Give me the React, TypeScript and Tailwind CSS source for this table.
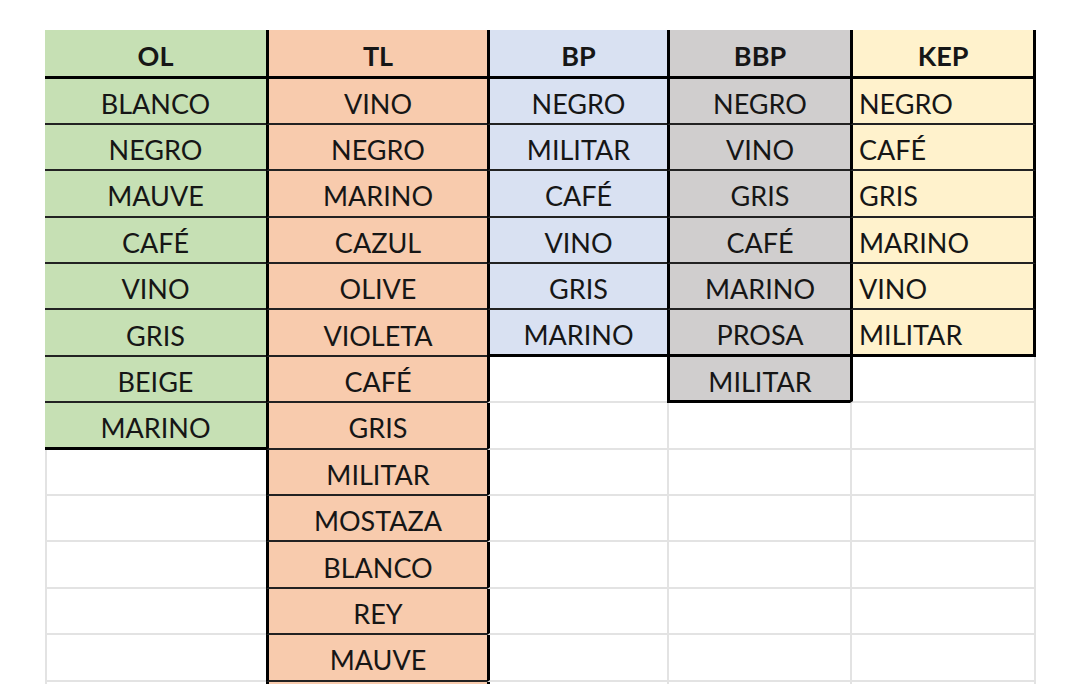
import React from 'react';

const L_THICK = 'border-l-[3px] border-l-black';
const L_GRID = 'border-l-2 border-l-[#e3e3e3]';
const R_THICK = 'border-r-[3px] border-r-black';
const R_GRID = 'border-r-2 border-r-[#e3e3e3]';
const B_THICK = 'border-b-[3px] border-b-black';
const B_THIN = 'border-b-2 border-b-[#222]';
const B_GRID = 'border-b-2 border-b-[#e3e3e3]';

const BODY_ROWS = 14;

type ColumnDef = {
  title: string;
  items: string[];
  width: string;
  bg: string;
  leftThickRows: number;
  rightThickRows: number;
  leftGrid: boolean;
  rightGrid: boolean;
  thickBottomAt: number[];
  fillRows?: number;
  alignLeft?: boolean;
};

const columns: ColumnDef[] = [
  {
    title: 'OL',
    items: ['BLANCO', 'NEGRO', 'MAUVE', 'CAFÉ', 'VINO', 'GRIS', 'BEIGE', 'MARINO'],
    width: 'w-[221px]',
    bg: 'bg-[#c6e0b4]',
    leftThickRows: 0,
    rightThickRows: 0,
    leftGrid: true,
    rightGrid: false,
    thickBottomAt: [8],
  },
  {
    title: 'TL',
    items: [
      'VINO', 'NEGRO', 'MARINO', 'CAZUL', 'OLIVE', 'VIOLETA', 'CAFÉ',
      'GRIS', 'MILITAR', 'MOSTAZA', 'BLANCO', 'REY', 'MAUVE',
    ],
    width: 'w-[221px]',
    bg: 'bg-[#f8cbad]',
    leftThickRows: 99,
    rightThickRows: 0,
    leftGrid: false,
    rightGrid: false,
    thickBottomAt: [],
    fillRows: 14,
  },
  {
    title: 'BP',
    items: ['NEGRO', 'MILITAR', 'CAFÉ', 'VINO', 'GRIS', 'MARINO'],
    width: 'w-[180px]',
    bg: 'bg-[#d9e1f2]',
    leftThickRows: 99,
    rightThickRows: 0,
    leftGrid: false,
    rightGrid: false,
    thickBottomAt: [6],
  },
  {
    title: 'BBP',
    items: ['NEGRO', 'VINO', 'GRIS', 'CAFÉ', 'MARINO', 'PROSA', 'MILITAR'],
    width: 'w-[183px]',
    bg: 'bg-[#d0cece]',
    leftThickRows: 8,
    rightThickRows: 0,
    leftGrid: true,
    rightGrid: false,
    thickBottomAt: [6, 7],
  },
  {
    title: 'KEP',
    items: ['NEGRO', 'CAFÉ', 'GRIS', 'MARINO', 'VINO', 'MILITAR'],
    width: 'w-[186px]',
    bg: 'bg-[#fff2cc]',
    leftThickRows: 8,
    rightThickRows: 7,
    leftGrid: true,
    rightGrid: true,
    thickBottomAt: [6],
    alignLeft: true,
  },
];

function Column({ col }: { col: ColumnDef }) {
  const rows = [];
  for (let r = 0; r <= BODY_ROWS; r++) {
    const filled = r === 0 || r <= col.items.length || (col.fillRows ?? 0) >= r;
    const left = r < col.leftThickRows ? L_THICK : !filled && col.leftGrid ? L_GRID : '';
    const right = r < col.rightThickRows ? R_THICK : !filled && col.rightGrid ? R_GRID : '';
    const bottom =
      r === 0 || col.thickBottomAt.includes(r) ? B_THICK : filled ? B_THIN : B_GRID;
    const text = r === 0 ? col.title : col.items[r - 1] ?? '';

    rows.push(
      <div
        key={r}
        className={`flex shrink-0 items-center pt-[5px] ${r === 0 ? 'h-[48.5px]' : 'h-[46.4px]'} ${
          filled ? col.bg : 'bg-white'
        } ${left} ${right} ${bottom} ${
          col.alignLeft && r > 0 ? 'justify-start pl-[6px]' : 'justify-center'
        }`}
      >
        <span className={`leading-none ${r === 0 ? 'font-bold' : 'font-normal'}`}>{text}</span>
      </div>
    );
  }
  return <div className={`flex flex-col ${col.width}`}>{rows}</div>;
}

export default function App() {
  return (
    <div
      className="h-[684px] w-[1080px] overflow-hidden bg-white pl-[45px] pt-[30px] text-[27px] text-[#161616]"
      style={{ fontFamily: 'Lato, "Open Sans", "Liberation Sans", sans-serif' }}
    >
      <div className="flex">
        {columns.map((col) => (
          <Column key={col.title} col={col} />
        ))}
      </div>
    </div>
  );
}
